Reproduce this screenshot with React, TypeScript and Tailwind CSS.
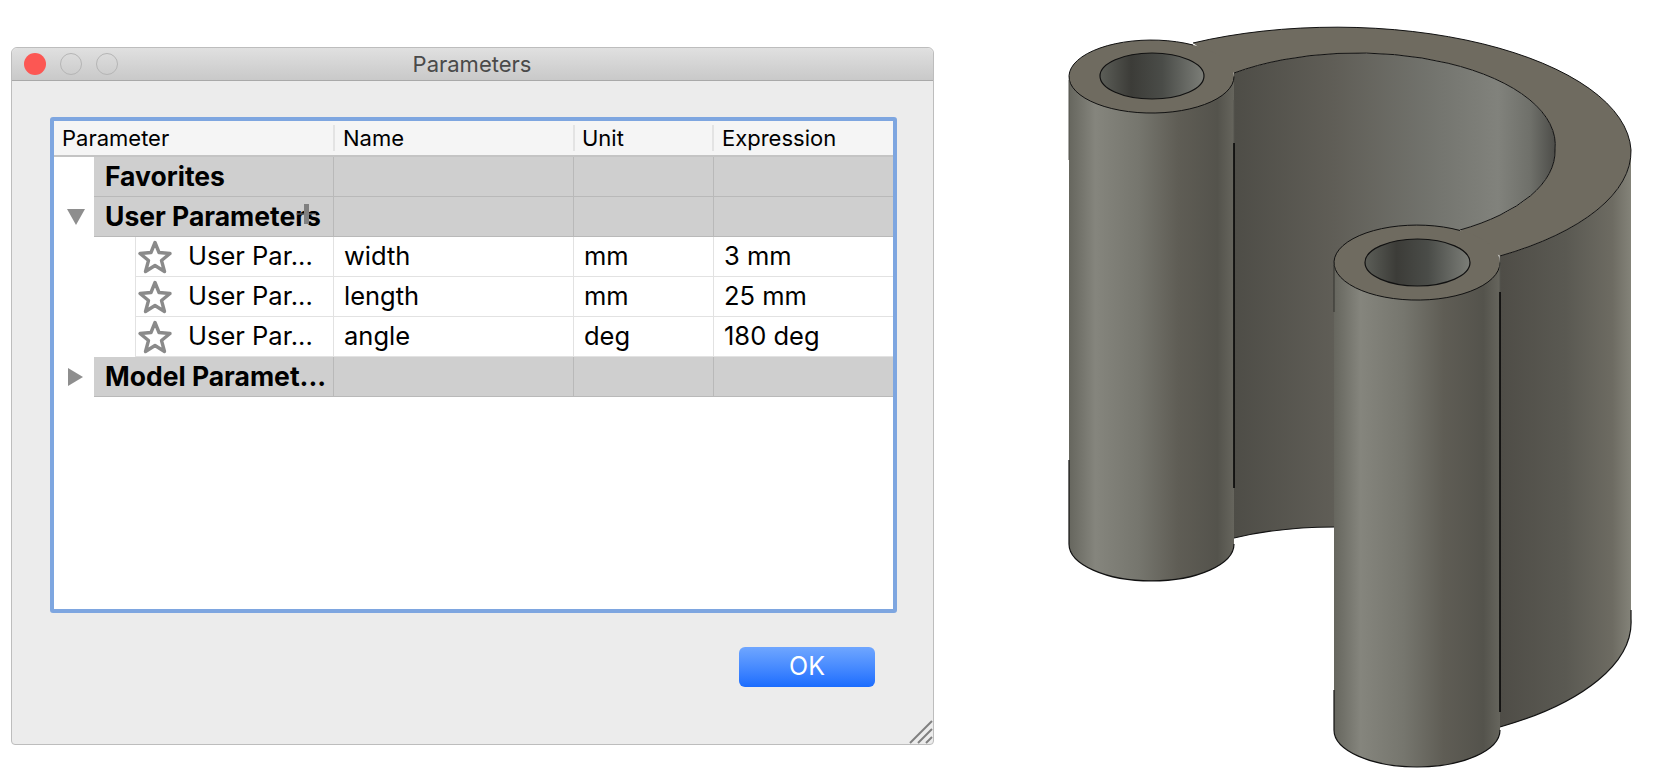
import React from "react";

const columns = ["Parameter", "Name", "Unit", "Expression"];

const userRows = [
  { name: "width", unit: "mm", expression: "3 mm" },
  { name: "length", unit: "mm", expression: "25 mm" },
  { name: "angle", unit: "deg", expression: "180 deg" },
];

const gridCols = "grid grid-cols-[40px_240px_240px_140px_1fr]";

const Star = () => (
  <svg width="36" height="36" viewBox="0 0 36 36" className="shrink-0">
    <path
      d="M18 3.5 L22 13.5 L33 14.5 L24.5 21.5 L27.5 32.5 L18 26.5 L8.5 32.5 L11.5 21.5 L3 14.5 L14 13.5 Z"
      fill="none"
      stroke="#8a8a8a"
      strokeWidth="3.4"
      strokeLinejoin="round"
    />
  </svg>
);

const GroupRow = ({ label, arrow }: { label: string; arrow?: "down" | "right" }) => (
  <div className={`${gridCols} h-10 relative`}>
    <div className="flex items-center justify-center pl-[3px]">
      {arrow === "down" && (
        <div className="w-0 h-0 border-l-[9px] border-r-[9px] border-t-[16px] border-l-transparent border-r-transparent border-t-[#8e8e8e]" />
      )}
      {arrow === "right" && (
        <div className="w-0 h-0 border-t-[9px] border-b-[9px] border-l-[15px] border-t-transparent border-b-transparent border-l-[#8e8e8e]" />
      )}
    </div>
    <div className="bg-[#cfcfcf] border-b border-[#b9b9b9] border-r flex items-center pl-[11px] font-bold text-[26.5px] text-black whitespace-nowrap overflow-hidden">
      {label}
    </div>
    <div className="bg-[#cfcfcf] border-b border-r border-[#b9b9b9]" />
    <div className="bg-[#cfcfcf] border-b border-r border-[#b9b9b9]" />
    <div className="bg-[#cfcfcf] border-b border-[#b9b9b9]" />
  </div>
);

const Model3D = () => (
  <svg width="728" height="780" viewBox="934 0 728 780" className="shrink-0">
    <defs>
      <linearGradient id="cylinder" x1="0" y1="0" x2="1" y2="0">
        <stop offset="0" stopColor="#66665e" />
        <stop offset="0.16" stopColor="#85857d" />
        <stop offset="0.42" stopColor="#76766e" />
        <stop offset="0.66" stopColor="#5f5d55" />
        <stop offset="0.9" stopColor="#54534c" />
        <stop offset="1" stopColor="#66655d" />
      </linearGradient>
      <linearGradient id="innerWall" gradientUnits="userSpaceOnUse" x1="1234" y1="0" x2="1556" y2="0">
        <stop offset="0" stopColor="#4e4d47" />
        <stop offset="0.3" stopColor="#5f5d56" />
        <stop offset="0.62" stopColor="#73746e" />
        <stop offset="0.82" stopColor="#81827c" />
        <stop offset="0.92" stopColor="#6f706a" />
        <stop offset="1" stopColor="#4c4c48" />
      </linearGradient>
      <linearGradient id="outerWall" gradientUnits="userSpaceOnUse" x1="1500" y1="0" x2="1632" y2="0">
        <stop offset="0" stopColor="#4f4d47" />
        <stop offset="0.5" stopColor="#5a5952" />
        <stop offset="0.85" stopColor="#6d6b62" />
        <stop offset="1" stopColor="#85847a" />
      </linearGradient>
      <linearGradient id="hole" x1="0" y1="0" x2="1" y2="0">
        <stop offset="0" stopColor="#5c5e58" />
        <stop offset="0.3" stopColor="#3c3c38" />
        <stop offset="0.6" stopColor="#4a4c48" />
        <stop offset="1" stopColor="#7c7e78" />
      </linearGradient>
    </defs>

    {/* outer wall */}
    <path
      d="M1500 256 A295 126 0 0 0 1631 150 L1631 619 A295 126 0 0 1 1500 727 Z"
      fill="url(#outerWall)"
    />
    <path d="M1631 610 L1631 619 A295 126 0 0 1 1500 727" fill="none" stroke="#111" strokeWidth="1.2" />

    {/* inner wall */}
    <path
      d="M1234 73 A198 92 0 0 1 1555 150 A198 92 0 0 1 1460 230 L1340 300 L1340 527 Q1280 527 1234 538 Z"
      fill="url(#innerWall)"
    />
    <path d="M1234 538 Q1280 527 1334 527" fill="none" stroke="#111" strokeWidth="1.2" />

    {/* top face */}
    <path
      d="M1193 43 A295 126 0 0 1 1631 150 A295 126 0 0 1 1500 256 L1460 230 A198 92 0 0 0 1555 150 A198 92 0 0 0 1234 73 Z"
      fill="#6f6b60"
    />
    <path d="M1193 43 A295 126 0 0 1 1631 150 A295 126 0 0 1 1500 256" fill="none" stroke="#111" strokeWidth="1" />
    <path d="M1460 230 A198 92 0 0 0 1555 150 A198 92 0 0 0 1234 73" fill="none" stroke="#111" strokeWidth="1" />

    {/* left boss */}
    <path d="M1069 76 L1069 544 A82.5 37 0 0 0 1234 544 L1234 76 Z" fill="url(#cylinder)" />
    <path d="M1069 460 L1069 544 A82.5 37 0 0 0 1234 544" fill="none" stroke="#111" strokeWidth="1.2" />
    <ellipse cx="1151.5" cy="76.5" rx="82.5" ry="36.5" fill="#6f6b60" />
    <path d="M1193 45 A82.5 36.5 0 1 0 1234 76.5" fill="none" stroke="#111" strokeWidth="1" />
    <ellipse cx="1152" cy="76" rx="52" ry="23" fill="url(#hole)" stroke="#111" strokeWidth="1.2" />
    <line x1="1234" y1="100" x2="1234" y2="143" stroke="#55554f" strokeWidth="1" />
    <line x1="1234" y1="143" x2="1234" y2="488" stroke="#000" strokeWidth="1.5" />
    <line x1="1069" y1="80" x2="1069" y2="160" stroke="#55554f" strokeWidth="1" />

    {/* right boss */}
    <path d="M1334 262 L1334 730 A83 37 0 0 0 1500 730 L1500 262 Z" fill="url(#cylinder)" />
    <path d="M1334 690 L1334 730 A83 37 0 0 0 1500 730" fill="none" stroke="#111" strokeWidth="1.2" />
    <ellipse cx="1417" cy="262.5" rx="83" ry="37.5" fill="#6f6b60" />
    <path d="M1460 230.5 A83 37.5 0 1 0 1500 262.5" fill="none" stroke="#111" strokeWidth="1" />
    <ellipse cx="1417.5" cy="262.5" rx="52.5" ry="23.5" fill="url(#hole)" stroke="#111" strokeWidth="1.2" />
    <line x1="1500" y1="256" x2="1500" y2="292" stroke="#55554f" strokeWidth="1" />
    <line x1="1500" y1="292" x2="1500" y2="712" stroke="#000" strokeWidth="1.5" />
    <line x1="1334" y1="265" x2="1334" y2="312" stroke="#33332f" strokeWidth="1" />
  </svg>
);

export default function App() {
  return (
    <div className="flex w-[1662px] h-[780px] bg-white overflow-hidden font-['Inter',sans-serif]">
      <div className="relative mt-[47px] ml-[11px] w-[923px] h-[698px] shrink-0 bg-[#ececec] border border-[#bdbdbd] rounded-t-md rounded-b-sm flex flex-col">
        <div className="h-[33px] shrink-0 flex items-center relative bg-gradient-to-b from-[#e0e0e0] to-[#c9c9c9] border-b border-[#a9a9a9] rounded-t-md px-3">
          <div className="flex gap-[14px]">
            <div className="w-[22px] h-[22px] rounded-full bg-[#fc5753]" />
            <div className="w-[22px] h-[22px] rounded-full border border-[#b5b5b5]" />
            <div className="w-[22px] h-[22px] rounded-full border border-[#b5b5b5]" />
          </div>
          <div className="flex-1 text-center text-[22px] text-[#4a4a4a] pr-[95px]">Parameters</div>
        </div>

        <div className="mt-[36px] ml-[38px] w-[847px] h-[496px] border-4 border-[#7ea6e0] rounded-[3px] bg-white">
          <div className="h-9 bg-[#f5f5f5] border-b-2 border-[#c4c4c4] grid grid-cols-[279px_240px_139px_1fr] items-center text-[22px] text-black">
            {columns.map((col, i) => (
              <div key={col} className={`h-[26px] flex items-center ${i === 2 ? "pl-[7px]" : "pl-2"} ${i > 0 ? "border-l-2 border-[#e3e3e3]" : ""}`}>
                {col}
              </div>
            ))}
          </div>

          <GroupRow label="Favorites" />
          <div className="relative">
            <GroupRow label="User Parameters" arrow="down" />
            <div className="absolute left-[250px] top-[7px] w-[5px] h-5 bg-[#808080]" />
            <div className="absolute left-[242px] top-[16px] w-5 h-[2px] bg-[#808080]/50" />
          </div>
          {userRows.map((row) => (
            <div key={row.name} className={`${gridCols} h-10 text-[25.5px] text-black`}>
              <div />
              <div className="pl-[41px] h-10">
                <div className="h-10 border-l border-b border-r border-[#e2e2e2] flex items-center whitespace-nowrap pl-[1px]">
                  <Star />
                  <span className="ml-[15px]">User Par...</span>
                </div>
              </div>
              <div className="border-b border-r border-[#e2e2e2] flex items-center pl-[10px]">{row.name}</div>
              <div className="border-b border-r border-[#e2e2e2] flex items-center pl-[10px]">{row.unit}</div>
              <div className="border-b border-[#e2e2e2] flex items-center pl-[10px]">{row.expression}</div>
            </div>
          ))}
          <GroupRow label="Model Paramet..." arrow="right" />
        </div>

        <div className="mt-[34px] flex justify-end pr-[58px]">
          <button className="w-[136px] h-10 rounded-md bg-gradient-to-b from-[#6fa6ff] to-[#1a6cfe] text-white text-[25px]">
            OK
          </button>
        </div>

        <svg width="24" height="24" viewBox="0 0 24 24" className="absolute right-0 bottom-0">
          <path d="M1 23 L23 1 M9 23 L23 9 M17 23 L23 17" stroke="#808080" strokeWidth="2" />
        </svg>
      </div>

      <Model3D />
    </div>
  );
}
